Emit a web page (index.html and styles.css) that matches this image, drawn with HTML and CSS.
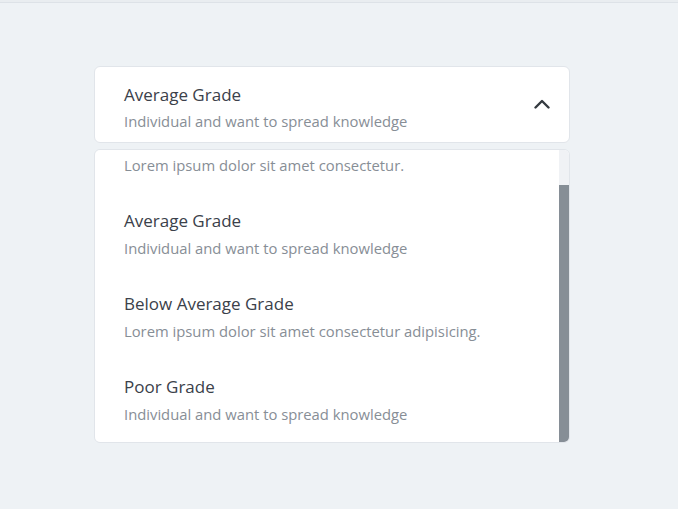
FILE: index.html
```html
<!DOCTYPE html>
<html lang="en">
<head>
<meta charset="utf-8">
<title>Grade select</title>
<link rel="stylesheet" href="styles.css">
</head>
<body>
<div class="topbar"></div>
<main class="page">
  <div class="select">
    <div class="trigger" role="button" tabindex="0">
      <div class="trigger-text">
        <div class="title">Average Grade</div>
        <div class="sub">Individual and want to spread knowledge</div>
      </div>
      <svg class="chevron" width="16" height="10" viewBox="0 0 16 10" aria-hidden="true">
        <polyline points="1.5,8.5 8,2 14.5,8.5" fill="none" stroke="currentColor" stroke-width="2.4" stroke-linecap="round" stroke-linejoin="round"/>
      </svg>
    </div>
    <div class="options-wrap">
      <ul class="options" id="options">
        <li class="option">
          <div class="title">Excellent Grade</div>
          <div class="sub">Lorem ipsum dolor sit amet consectetur.</div>
        </li>
        <li class="option">
          <div class="title">Average Grade</div>
          <div class="sub">Individual and want to spread knowledge</div>
        </li>
        <li class="option">
          <div class="title">Below Average Grade</div>
          <div class="sub">Lorem ipsum dolor sit amet consectetur adipisicing.</div>
        </li>
        <li class="option">
          <div class="title">Poor Grade</div>
          <div class="sub">Individual and want to spread knowledge</div>
        </li>
      </ul>
      <div class="scrollbar" aria-hidden="true">
        <div class="thumb" id="thumb"></div>
      </div>
    </div>
  </div>
</main>
<script src="script.js"></script>
</body>
</html>
```

FILE: styles.css
```css
* { box-sizing: border-box; }
html, body {
  margin: 0;
  padding: 0;
  background: #eef2f5;
  font-family: "Open Sans", "Liberation Sans", sans-serif;
}
.topbar {
  height: 3px;
  border-bottom: 1px solid #dde2e7;
  background: #e9edf0;
}
.page {
  padding-top: 63px;
  padding-left: 94px;
}
.select {
  width: 476px;
}
.trigger {
  display: flex;
  align-items: center;
  justify-content: space-between;
  height: 77px;
  padding: 0 19px 0 29px;
  background: #ffffff;
  border: 1px solid #e1e5ea;
  border-radius: 6px;
  color: #343a40;
  cursor: pointer;
}
.trigger-text {
  padding-top: 6px;
}
.title {
  font-size: 17px;
  line-height: 24px;
  color: #3b414a;
  white-space: nowrap;
}
.sub {
  margin-top: 4px;
  font-size: 14.8px;
  line-height: 21px;
  color: #878e96;
  white-space: nowrap;
}
.option .sub {
  margin-top: 5px;
}
.chevron {
  display: block;
  color: #343a40;
  margin-top: -1px;
}
.options-wrap {
  position: relative;
  margin-top: 6px;
}
.options {
  list-style: none;
  margin: 0;
  padding: 0;
  height: 294px;
  overflow-y: auto;
  scrollbar-width: none;
  background: #ffffff;
  border: 1px solid #e1e5ea;
  border-radius: 6px;
}
.options::-webkit-scrollbar {
  display: none;
}
.option {
  padding: 16px 24px 0 29px;
  height: 83px;
}
.scrollbar {
  position: absolute;
  top: 1px;
  right: 1px;
  bottom: 1px;
  width: 10px;
  background: #f0f2f5;
  border-radius: 0 5px 5px 0;
  overflow: hidden;
}
.thumb {
  position: absolute;
  left: 0;
  right: 0;
  background: #868e96;
}
```

FILE: script.js
```js
var list = document.getElementById('options');
var thumb = document.getElementById('thumb');
list.scrollTop = list.scrollHeight;
function syncThumb() {
  var view = list.clientHeight;
  var total = list.scrollHeight;
  var h = view * view / total;
  var top = (view - h) * list.scrollTop / Math.max(1, total - view);
  thumb.style.height = h + 'px';
  thumb.style.top = top + 'px';
}
list.addEventListener('scroll', syncThumb);
syncThumb();
```
